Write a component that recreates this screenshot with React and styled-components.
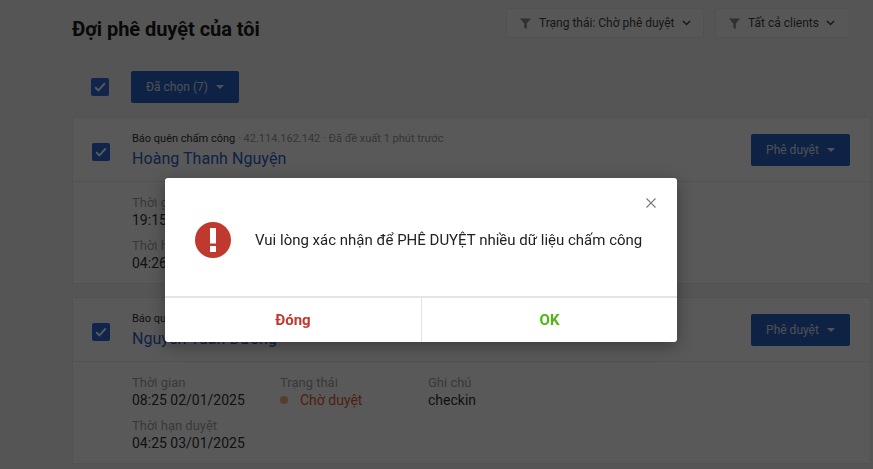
import React from "react";
import styled, { createGlobalStyle } from "styled-components";

const GlobalStyle = createGlobalStyle`
  html, body {
    margin: 0;
    padding: 0;
    height: 100%;
    overflow: hidden;
    background: #f3f3f3;
    font-family: Roboto, "Liberation Sans", sans-serif;
  }
  * {
    box-sizing: border-box;
  }
`;

const Page = styled.div`
  height: 469px;
  overflow: hidden;
  padding: 8px 2px 0 72px;
`;

const TopBar = styled.div`
  display: flex;
  justify-content: space-between;
  align-items: flex-start;
  padding-right: 21px;
  height: 63px;
`;

const Title = styled.h1`
  margin: 8px 0 0;
  font-size: 20px;
  line-height: 26px;
  font-weight: 700;
  letter-spacing: -0.05px;
  color: #1a1a1a;
`;

const Filters = styled.div`
  display: flex;
  gap: 11px;
`;

const FilterButton = styled.div`
  display: flex;
  align-items: center;
  height: 30px;
  width: ${(p) => p.$width}px;
  padding-left: 13px;
  background: #f8f8f8;
  border: 1px solid #ececec;
  border-radius: 2px;
  font-size: 12px;
  color: #444;

  span {
    margin: 0 7px 0 8px;
  }
`;

const Toolbar = styled.div`
  display: flex;
  align-items: center;
  gap: 22px;
  height: 32px;
  margin-bottom: 14px;
  padding-left: 19px;
`;

const Check = styled.div`
  width: 18px;
  height: 18px;
  flex: none;
  margin-top: ${(p) => p.$offset || 0}px;
  display: flex;
  align-items: center;
  justify-content: center;
  background: #3168d8;
  border-radius: 2px;
`;

const PrimaryButton = styled.div`
  display: flex;
  align-items: center;
  justify-content: center;
  gap: 8px;
  height: 32px;
  width: ${(p) => p.$width}px;
  flex: none;
  background: #2a62c8;
  border-radius: 2px;
  font-size: 12px;
  font-weight: 400;
  color: #dfe4ee;
`;

const Caret = styled.i`
  width: 0;
  height: 0;
  border-left: 4px solid transparent;
  border-right: 4px solid transparent;
  border-top: 4px solid #e4e8f0;
`;

const Card = styled.div`
  background: #ffffff;
  border: 1px solid #ececec;
  margin-bottom: 13px;
  height: 167px;
`;

const CardHead = styled.div`
  display: flex;
  align-items: center;
  height: 64px;
  padding: 0 20px 0 19px;
  border-bottom: 1px solid #ececec;
`;

const CardTitle = styled.div`
  flex: 1;
  margin-left: 22px;
  padding-top: 1px;
`;

const Meta = styled.div`
  font-size: 11px;
  line-height: 14px;
  color: #9a9a9a;

  b {
    font-weight: 400;
    color: #333;
  }
`;

const Name = styled.div`
  margin-top: 3px;
  font-size: 16px;
  line-height: 20px;
  letter-spacing: 0.05px;
  font-weight: 400;
  color: #2c62c4;
`;

const Details = styled.div`
  display: grid;
  grid-template-columns: 148px 148px 1fr;
  grid-template-rows: 43px 43px;
  padding: 12px 0 0 59px;
`;

const Field = styled.div`
  font-size: 13px;
  line-height: 17px;
  color: #a4a4a4;
`;

const Value = styled.div`
  font-size: 14px;
  line-height: 18px;
  color: #333;
`;

const Pending = styled(Value)`
  display: flex;
  align-items: center;
  color: #e05a2b;

  i {
    width: 8px;
    height: 8px;
    margin-right: 12px;
    border-radius: 50%;
    background: #f0b08c;
  }
`;

const Overlay = styled.div`
  position: fixed;
  inset: 0;
  background: rgba(0, 0, 0, 0.65);
`;

const Modal = styled.div`
  position: absolute;
  left: 165px;
  top: 178px;
  width: 512px;
  height: 164px;
  display: flex;
  flex-direction: column;
  background: #fff;
  border-radius: 3px;
  box-shadow: 0 4px 16px rgba(0, 0, 0, 0.35);
`;

const Close = styled.div`
  position: absolute;
  right: 20px;
  top: 19px;
  width: 12px;
  height: 12px;
  display: flex;
`;

const ModalBody = styled.div`
  flex: 1;
  display: flex;
  align-items: center;
  gap: 24px;
  padding: 5px 0 0 30px;
  font-size: 15px;
  color: #222;
`;

const ModalFoot = styled.div`
  display: grid;
  grid-template-columns: 256px 1fr;
  height: 46px;
  border-top: 2px solid #e4e4e4;
`;

const FootButton = styled.div`
  display: flex;
  align-items: center;
  justify-content: center;
  font-size: 15px;
  font-weight: 700;
  color: ${(p) => p.$color};

  & + & {
    border-left: 1px solid #e4e4e4;
  }
`;

const FunnelIcon = () => (
  <svg width="11" height="11" viewBox="0 0 11 11">
    <path d="M0 0.5h11L6.8 5.6V11L4.2 9.4V5.6z" fill="#8a8a8a" />
  </svg>
);

const ChevronIcon = () => (
  <svg width="9" height="6" viewBox="0 0 9 6">
    <path d="M1 1l3.5 3.5L8 1" fill="none" stroke="#444" strokeWidth="1.4" />
  </svg>
);

const CheckMark = ({ offset }) => (
  <Check $offset={offset}>
    <svg width="12" height="10" viewBox="0 0 12 10">
      <path d="M1.2 5.2l3.2 3.2 6.4-7" fill="none" stroke="#fff" strokeWidth="2" />
    </svg>
  </Check>
);

const AlertIcon = () => (
  <svg width="36" height="36" viewBox="0 0 36 36">
    <circle cx="18" cy="18" r="18" fill="#c0392f" />
    <rect x="15" y="6" width="6" height="15.5" fill="#fff" />
    <rect x="15" y="24" width="6" height="6" fill="#fff" />
  </svg>
);

const requests = [
  { name: "Hoàng Thanh Nguyện", time: "19:15 01/01/2025", due: "04:26 03/01/2025", note: "checkout" },
  { name: "Nguyễn Tuấn Dương", time: "08:25 02/01/2025", due: "04:25 03/01/2025", note: "checkin" },
];

const App = () => (
  <>
    <GlobalStyle />
    <Page>
      <TopBar>
        <Title>Đợi phê duyệt của tôi</Title>
        <Filters>
          <FilterButton $width={198}>
            <FunnelIcon />
            <span>Trạng thái: Chờ phê duyệt</span>
            <ChevronIcon />
          </FilterButton>
          <FilterButton $width={135}>
            <FunnelIcon />
            <span>Tất cả clients</span>
            <ChevronIcon />
          </FilterButton>
        </Filters>
      </TopBar>
      <Toolbar>
        <CheckMark />
        <PrimaryButton $width={108}>
          Đã chọn (7) <Caret />
        </PrimaryButton>
      </Toolbar>
      {requests.map((r) => (
        <Card key={r.name}>
          <CardHead>
            <CheckMark offset={4} />
            <CardTitle>
              <Meta>
                <b>Báo quên chấm công</b> · 42.114.162.142 · Đã đề xuất 1 phút trước
              </Meta>
              <Name>{r.name}</Name>
            </CardTitle>
            <PrimaryButton $width={99}>
              Phê duyệt <Caret />
            </PrimaryButton>
          </CardHead>
          <Details>
            <div>
              <Field>Thời gian</Field>
              <Value>{r.time}</Value>
            </div>
            <div>
              <Field>Trạng thái</Field>
              <Pending>
                <i />
                Chờ duyệt
              </Pending>
            </div>
            <div>
              <Field>Ghi chú</Field>
              <Value>{r.note}</Value>
            </div>
            <div>
              <Field>Thời hạn duyệt</Field>
              <Value>{r.due}</Value>
            </div>
          </Details>
        </Card>
      ))}
    </Page>
    <Overlay />
    <Modal>
      <Close>
        <svg width="12" height="12" viewBox="0 0 12 12">
          <path d="M1.5 1.5l9 9M10.5 1.5l-9 9" stroke="#777" strokeWidth="1.2" fill="none" />
        </svg>
      </Close>
      <ModalBody>
        <AlertIcon />
        <span>Vui lòng xác nhận để PHÊ DUYỆT nhiều dữ liệu chấm công</span>
      </ModalBody>
      <ModalFoot>
        <FootButton $color="#c0392f">Đóng</FootButton>
        <FootButton $color="#52b415">OK</FootButton>
      </ModalFoot>
    </Modal>
  </>
);

export default App;
